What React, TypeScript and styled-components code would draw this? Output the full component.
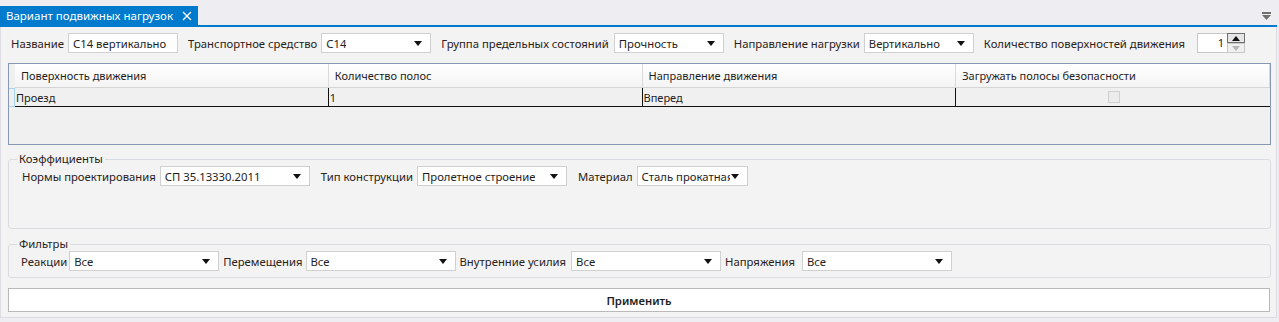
import React from 'react';
import styled, { createGlobalStyle } from 'styled-components';

const GlobalStyle = createGlobalStyle`
  html, body {
    margin: 0;
    padding: 0;
    background: #eeeef2;
  }
  body {
    font-family: 'Noto Sans', 'Segoe UI', sans-serif;
    font-size: 11.3px;
    color: #1e1e1e;
  }
`;

const Window = styled.div`
  width: 1279px;
  height: 322px;
  padding-top: 6px;
  box-sizing: border-box;
  position: relative;
`;

const TabStrip = styled.div`
  display: flex;
  align-items: flex-end;
  height: 19px;
  width: 1277px;
  border-bottom: 2px solid #007acc;
`;

const Tab = styled.div`
  display: flex;
  align-items: center;
  gap: 9px;
  height: 19px;
  padding: 0 6px 0 6px;
  background: #007acc;
  color: #fff;
  font-size: 11.5px;
`;

const MenuToggle = styled.svg`
  position: absolute;
  right: 8px;
  top: 12px;
`;

const Panel = styled.div`
  width: 1277px;
  height: 291px;
  box-sizing: border-box;
  background: #f3f3f3;
  border: 1px solid #dcdce2;
  border-top: none;
  padding: 6px 6px 0 7px;
  display: flex;
  flex-direction: column;
`;

const Row = styled.div<{ $gap?: number; $pad?: number }>`
  display: flex;
  align-items: center;
  gap: ${(p) => p.$gap ?? 10}px;
  padding-left: ${(p) => p.$pad ?? 0}px;
  height: 20px;
`;

const Field = styled.div<{ $gap?: number }>`
  display: flex;
  align-items: center;
  gap: ${(p) => p.$gap ?? 4}px;
`;

const Label = styled.span`
  white-space: nowrap;
  color: #2a2218;
`;

const TextBox = styled.div<{ $w: number }>`
  width: ${(p) => p.$w}px;
  height: 20px;
  box-sizing: border-box;
  background: #fff;
  border: 1px solid #d0d0d0;
  padding: 0 4px;
  display: flex;
  align-items: center;
  white-space: nowrap;
  overflow: hidden;
`;

const SelectBox = styled(TextBox)`
  position: relative;
  padding-right: 17px;
`;

const SelectText = styled.span`
  overflow: hidden;
  white-space: nowrap;
`;

const Arrow = styled.span`
  position: absolute;
  right: 8px;
  top: 7px;
  width: 0;
  height: 0;
  border-left: 4px solid transparent;
  border-right: 4px solid transparent;
  border-top: 5px solid #111;
`;

const Spinner = styled.div`
  display: flex;
  margin-left: 8px;
  height: 20px;
`;

const SpinValue = styled.div`
  width: 30px;
  box-sizing: border-box;
  background: #fff;
  border: 1px solid #c8c8c8;
  border-right: none;
  text-align: right;
  padding-right: 3px;
  line-height: 18px;
`;

const SpinButtons = styled.div`
  display: flex;
  flex-direction: column;
  width: 18px;
`;

const SpinButton = styled.div<{ $active?: boolean }>`
  height: 10px;
  box-sizing: border-box;
  border: 1px solid ${(p) => (p.$active ? '#707070' : '#c8c8c8')};
  background: ${(p) => (p.$active ? '#e6e6e6' : '#f0f0f0')};
  display: flex;
  align-items: center;
  justify-content: center;
`;

const Grid = styled.div`
  margin-top: 10px;
  height: 82px;
  width: 1263px;
  box-sizing: border-box;
  border: 1px solid #8798b5;
  background: #f0f0f0;
  display: grid;
  grid-template-columns: 6px repeat(4, 1fr);
  grid-template-rows: 24px 19px 1fr;
  font-size: 11px;
`;

const HeaderCorner = styled.div`
  background: #f0f0f0;
`;

const HeaderCell = styled.div`
  background: linear-gradient(#ffffff, #f4f4f4);
  border-right: 1px solid #dadada;
  border-bottom: 1px solid #d5d5d5;
  padding-left: 6px;
  display: flex;
  align-items: center;
  white-space: nowrap;
  &:last-child {
    border-right: none;
  }
`;

const RowHeader = styled.div`
  border: 1px solid #a7d6f2;
  border-left: none;
  background: #f0f0f0;
`;

const Cell = styled.div<{ $center?: boolean; $last?: boolean }>`
  border-bottom: 1px solid #111;
  border-right: ${(p) => (p.$last ? 'none' : '1px solid #111')};
  padding-left: 1px;
  display: flex;
  align-items: center;
  justify-content: ${(p) => (p.$center ? 'center' : 'flex-start')};
`;

const CheckBox = styled.span`
  width: 12px;
  height: 12px;
  box-sizing: border-box;
  border: 1px solid #cfcfcf;
  background: #ececec;
`;

const GroupBox = styled.fieldset<{ $h: number; $mt: number; $pad: number }>`
  margin: ${(p) => p.$mt}px 0 0 0;
  width: 1263px;
  height: ${(p) => p.$h}px;
  box-sizing: border-box;
  border: 1px solid #d9dde2;
  border-radius: 3px;
  padding: 0 0 0 ${(p) => p.$pad}px;
  min-width: 0;
`;

const Legend = styled.legend<{ $shift: number }>`
  padding: 0 2px;
  margin-left: ${(p) => p.$shift}px;
  color: #2a2218;
  line-height: 14px;
`;

const ApplyButton = styled.button`
  margin-top: 10px;
  width: 1262px;
  height: 24px;
  background: #fff;
  border: 1px solid #b9b9b9;
  font-family: inherit;
  font-size: 11.3px;
  font-weight: 600;
  color: #1e1e1e;
  padding: 0;
`;

const Select = ({ w, value }: { w: number; value: string }) => (
  <SelectBox $w={w}>
    <SelectText>{value}</SelectText>
    <Arrow />
  </SelectBox>
);

export default function App() {
  return (
    <>
      <GlobalStyle />
      <Window>
        <TabStrip>
          <Tab>
            Вариант подвижных нагрузок
            <svg width="10" height="10" viewBox="0 0 10 10">
              <path d="M1 1 L9 9 M9 1 L1 9" stroke="#fff" strokeWidth="1.4" />
            </svg>
          </Tab>
        </TabStrip>
        <MenuToggle width="9" height="8" viewBox="0 0 9 8">
          <rect x="0" y="0" width="9" height="2" fill="#6f6f6f" />
          <path d="M0 3 L9 3 L4.5 8 Z" fill="#6f6f6f" />
        </MenuToggle>
        <Panel>
          <Row $pad={3}>
            <Field>
              <Label>Название</Label>
              <TextBox $w={110}>С14 вертикально</TextBox>
            </Field>
            <Field>
              <Label>Транспортное средство</Label>
              <Select w={110} value="С14" />
            </Field>
            <Field $gap={5}>
              <Label>Группа предельных состояний</Label>
              <Select w={110} value="Прочность" />
            </Field>
            <Field>
              <Label>Направление нагрузки</Label>
              <Select w={110} value="Вертикально" />
            </Field>
            <Field>
              <Label>Количество поверхностей движения</Label>
              <Spinner>
                <SpinValue>1</SpinValue>
                <SpinButtons>
                  <SpinButton $active>
                    <svg width="8" height="5" viewBox="0 0 8 5">
                      <path d="M0 5 L4 0 L8 5 Z" fill="#111" />
                    </svg>
                  </SpinButton>
                  <SpinButton>
                    <svg width="8" height="5" viewBox="0 0 8 5">
                      <path d="M0 0 L8 0 L4 5 Z" fill="#b5b5b5" />
                    </svg>
                  </SpinButton>
                </SpinButtons>
              </Spinner>
            </Field>
          </Row>

          <Grid>
            <HeaderCorner />
            <HeaderCell>Поверхность движения</HeaderCell>
            <HeaderCell>Количество полос</HeaderCell>
            <HeaderCell>Направление движения</HeaderCell>
            <HeaderCell>Загружать полосы безопасности</HeaderCell>
            <RowHeader />
            <Cell>Проезд</Cell>
            <Cell>1</Cell>
            <Cell>Вперед</Cell>
            <Cell $center $last>
              <CheckBox />
            </Cell>
          </Grid>

          <GroupBox $h={77} $mt={7} $pad={13}>
            <Legend $shift={-5}>Коэффициенты</Legend>
            <Row $pad={0} $gap={11}>
              <Field>
                <Label>Нормы проектирования</Label>
                <Select w={150} value="СП 35.13330.2011" />
              </Field>
              <Field>
                <Label>Тип конструкции</Label>
                <Select w={150} value="Пролетное строение" />
              </Field>
              <Field>
                <Label>Материал</Label>
                <Select w={111} value="Сталь прокатная" />
              </Field>
            </Row>
          </GroupBox>

          <GroupBox $h={41} $mt={8} $pad={12}>
            <Legend $shift={-4}>Фильтры</Legend>
            <Row $pad={0} $gap={4}>
              <Field $gap={2}>
                <Label>Реакции</Label>
                <Select w={150} value="Все" />
              </Field>
              <Field $gap={3}>
                <Label>Перемещения</Label>
                <Select w={150} value="Все" />
              </Field>
              <Field $gap={5}>
                <Label>Внутренние усилия</Label>
                <Select w={150} value="Все" />
              </Field>
              <Field $gap={7}>
                <Label>Напряжения</Label>
                <Select w={150} value="Все" />
              </Field>
            </Row>
          </GroupBox>

          <ApplyButton>Применить</ApplyButton>
        </Panel>
      </Window>
    </>
  );
}
